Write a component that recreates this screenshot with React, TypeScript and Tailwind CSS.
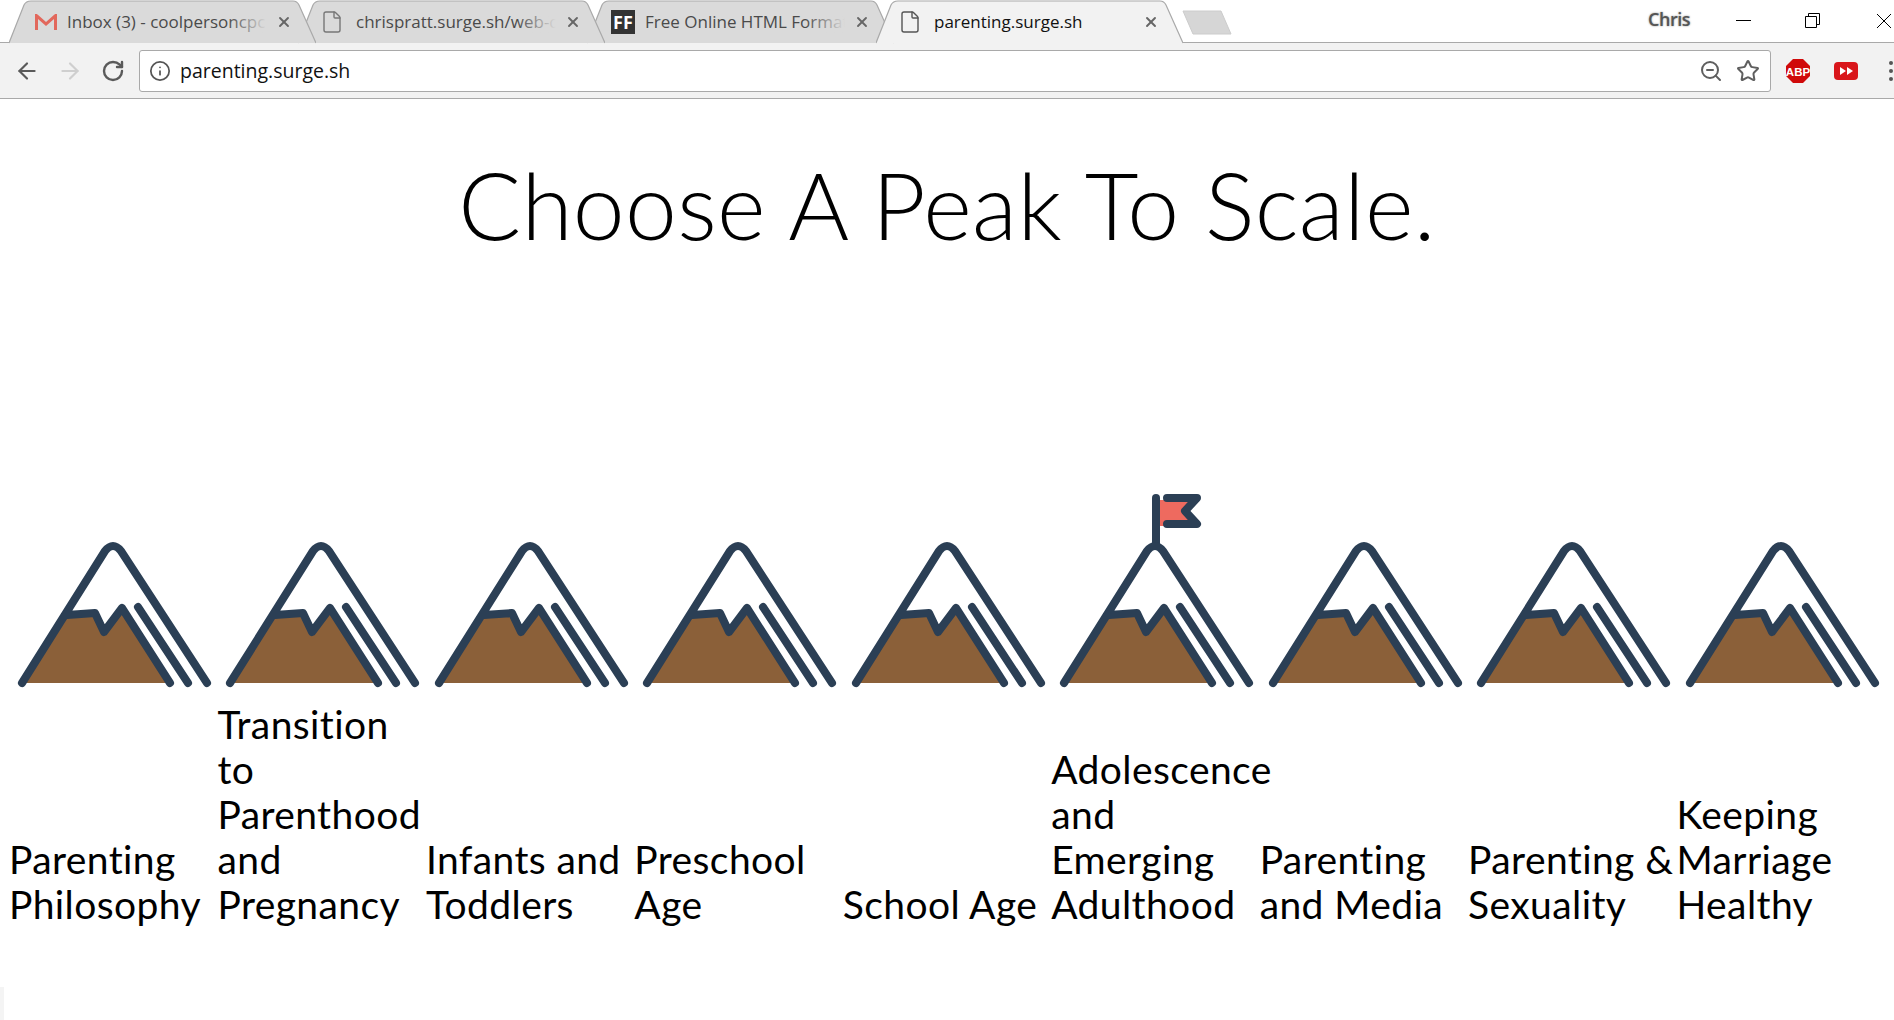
import { ArrowLeft, ArrowRight, RotateCw, Info, ZoomOut, Star, X, File } from "lucide-react";
import type { ReactNode } from "react";

const peaks = [
  { label: "Parenting\nPhilosophy" },
  { label: "Transition\nto\nParenthood\nand\nPregnancy" },
  { label: "Infants and\nToddlers" },
  { label: "Preschool\nAge" },
  { label: "School Age" },
  { label: "Adolescence\nand\nEmerging\nAdulthood", flag: true },
  { label: "Parenting\nand Media" },
  { label: "Parenting &\nSexuality" },
  { label: "Keeping\nMarriage\nHealthy" },
];

function GmailIcon() {
  return (
    <svg width="24" height="18" viewBox="0 0 24 18">
      <path d="M1 1h3v16H1zM20 1h3v16h-3z" fill="#e8e8e8" />
      <path d="M1 17V1h2l9 8 9-8h2v16h-3V6l-8 7-8-7v11z" fill="#e2685c" />
    </svg>
  );
}

function Tab({ title, icon, active, fade, z }: { title: string; icon: ReactNode; active?: boolean; fade?: boolean; z: string }) {
  return (
    <div className={`relative h-[43px] w-[307px] mr-[-18px] shrink-0 ${z}`}>
      <svg className="absolute inset-0" width="307" height="44" viewBox="0 0 307 44">
        <path
          d="M0 43 L15 5 Q17 1 22 1 L284 1 Q288 1 290 5 L307 43"
          fill={active ? "#f2f2f2" : "#dadada"}
          stroke="#a9a9a9"
          strokeWidth="1.2"
        />
      </svg>
      <div className="relative flex h-full items-center">
        <div className="ml-[25px] flex w-[33px] shrink-0 items-center">{icon}</div>
        <div className={`relative w-[200px] overflow-hidden whitespace-nowrap text-[17px] ${active ? "text-[#111111]" : "text-[#4a4a4a]"}`}>
          {title}
          {fade && <div className="absolute inset-y-0 right-0 w-10 bg-gradient-to-r from-transparent to-[#dadada]" />}
        </div>
        <X size={16} strokeWidth={2.8} className="ml-[9px] text-[#666666]" />
      </div>
    </div>
  );
}

function Mountain({ flag }: { flag?: boolean }) {
  const navy = "#2b3f55";
  return (
    <svg width="208" height="200" viewBox="0 0 208 200" className="block overflow-visible">
      {flag && (
        <g>
          <path d="M105 10H146L135 23L146 36H105Z" fill="#ee6a5f" />
          <path d="M116 8H146L134 21L146 34H116" fill="none" stroke={navy} strokeWidth="8" strokeLinecap="round" strokeLinejoin="round" />
          <path d="M105 8V54" fill="none" stroke={navy} strokeWidth="8" strokeLinecap="round" />
        </g>
      )}
      <path d="M13 193L58 125L86 123L95 142L113 118L161 193Z" fill="#8b6039" />
      <path
        d="M13 193L96 61Q104 51 112 61L198 193M129 117L179 193M58 125L86 123L95 142L113 118L161 193"
        fill="none"
        stroke={navy}
        strokeWidth="8"
        strokeLinecap="round"
        strokeLinejoin="round"
      />
    </svg>
  );
}

export default function App() {
  return (
    <div className="relative h-[1020px] overflow-hidden bg-white font-['Open_Sans',sans-serif]">
      {/* Tab strip */}
      <div className="relative flex h-[43px] border-b border-[#a9a9a9] pl-[9px]">
        <Tab z="z-30" fade title="Inbox (3) - coolpersoncpc" icon={<GmailIcon />} />
        <Tab z="z-20" fade title="chrispratt.surge.sh/web-dev" icon={<File size={24} strokeWidth={1.4} className="-ml-[3px] text-[#777777]" />} />
        <Tab
          z="z-10"
          fade
          title="Free Online HTML Formatter"
          icon={
            <div className="flex h-6 w-6 -ml-[1px] items-center justify-center bg-[#333333] text-[18px] font-bold leading-none text-white">FF</div>
          }
        />
        <Tab z="z-40" active title="parenting.surge.sh" icon={<File size={24} strokeWidth={1.4} className="-ml-[3px] text-[#555555]" />} />
        <svg width="52" height="26" viewBox="0 0 52 26" className="ml-[16px] mt-[10px] shrink-0">
          <path d="M2 1H40L50 24H12Z" fill="#d6d6d6" stroke="#cccccc" strokeLinejoin="round" />
        </svg>
        <div className="ml-auto flex items-start">
          <span className="mr-[46px] mt-[6px] text-[18px] font-semibold tracking-[-0.5px] text-[#555555] [text-shadow:0_0_2px_#888888]">Chris</span>
          <svg width="16" height="16" viewBox="0 0 16 16" className="mt-[13px] mr-[53px]">
            <path d="M0 7.5H15" stroke="#000000" />
          </svg>
          <svg width="16" height="16" viewBox="0 0 16 16" className="mt-[13px] mr-[55px]">
            <path d="M.5 3.5h11v11H.5zM3.5 3V.5h11v11H12" fill="none" stroke="#000000" />
          </svg>
          <svg width="16" height="16" viewBox="0 0 16 16" className="mt-[13px] mr-[2px]">
            <path d="M1 1l14 14M15 1L1 15" stroke="#000000" />
          </svg>
        </div>
      </div>

      {/* Toolbar */}
      <div className="flex h-[56px] items-center border-b border-[#a9a9a9] bg-[#f2f2f2] pl-[14px]">
        <ArrowLeft size={26} strokeWidth={2} className="text-[#5a5a5a]" />
        <ArrowRight size={26} strokeWidth={2} className="ml-[17px] text-[#cfcfcf]" />
        <RotateCw size={24} strokeWidth={2.4} className="ml-[18px] text-[#5a5a5a]" />
        <div className="ml-[14px] flex h-[42px] w-[1632px] shrink-0 items-center rounded-[3px] border border-[#a9a9a9] bg-white pl-[9px] pr-[10px]">
          <Info size={22} strokeWidth={1.9} className="text-[#555555]" />
          <span className="ml-[9px] text-[19.5px] text-[#111111]">parenting.surge.sh</span>
          <ZoomOut size={24} strokeWidth={2} className="ml-auto text-[#5f5f5f]" />
          <Star size={24} strokeWidth={2} className="ml-[13px] text-[#5f5f5f]" />
        </div>
        <svg width="26" height="26" viewBox="0 0 26 26" className="ml-[14px] shrink-0">
          <path d="M8 1H18L25 8V18L18 25H8L1 18V8Z" fill="#d00a0a" />
          <text x="13" y="17.5" textAnchor="middle" fontSize="11.5" fontWeight="700" fill="#ffffff" fontFamily="Liberation Sans, sans-serif">ABP</text>
        </svg>
        <svg width="26" height="20" viewBox="0 0 26 20" className="ml-[22px] shrink-0">
          <rect x="1" y="1" width="24" height="18" rx="4" fill="#d9161b" />
          <path d="M7 6l6 4-6 4zM14 6l6 4-6 4z" fill="#ffffff" />
        </svg>
        <div className="ml-[30px] flex shrink-0 flex-col gap-[4px]">
          <div className="h-[4px] w-[4px] rounded-full bg-[#555555]" />
          <div className="h-[4px] w-[4px] rounded-full bg-[#555555]" />
          <div className="h-[4px] w-[4px] rounded-full bg-[#555555]" />
        </div>
      </div>

      {/* Page */}
      <div className="px-[9px] font-['Lato',sans-serif] text-black">
        <h1 className="mt-[50px] h-[341px] text-center text-[93px] font-light leading-[110px] tracking-[0.3px]">Choose A Peak To Scale.</h1>
        <div className="grid grid-cols-9">
          {peaks.map((p) => (
            <div key={p.label} className="flex flex-col">
              <Mountain flag={p.flag} />
              <div className="flex h-[237px] flex-col justify-end whitespace-pre text-[39px] leading-[45px] tracking-[0.4px]">{p.label}</div>
            </div>
          ))}
        </div>
      </div>

      <div className="absolute bottom-0 left-0 h-[33px] w-[4px] bg-[#f4f4f4]" />
    </div>
  );
}
